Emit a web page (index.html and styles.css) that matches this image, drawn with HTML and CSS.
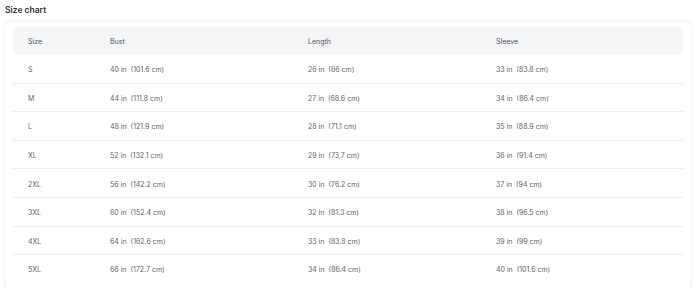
FILE: index.html
```html
<!DOCTYPE html>
<html>
<head>
<meta charset="utf-8">
<link rel="stylesheet" href="styles.css">
</head>
<body>
<div class="page">
  <h2 class="title">Size chart</h2>
  <div class="card">
    <table class="chart">
      <thead>
        <tr><th class="c1">Size</th><th class="c2">Bust</th><th class="c3">Length</th><th class="c4">Sleeve</th></tr>
      </thead>
      <tbody>
        <tr><td>S</td><td>40 in&nbsp; (101.6 cm)</td><td>26 in&nbsp; (66 cm)</td><td>33 in&nbsp; (83.8 cm)</td></tr>
        <tr><td>M</td><td>44 in&nbsp; (111.8 cm)</td><td>27 in&nbsp; (68.6 cm)</td><td>34 in&nbsp; (86.4 cm)</td></tr>
        <tr><td>L</td><td>48 in&nbsp; (121.9 cm)</td><td>28 in&nbsp; (71.1 cm)</td><td>35 in&nbsp; (88.9 cm)</td></tr>
        <tr><td>XL</td><td>52 in&nbsp; (132.1 cm)</td><td>29 in&nbsp; (73.7 cm)</td><td>36 in&nbsp; (91.4 cm)</td></tr>
        <tr><td>2XL</td><td>56 in&nbsp; (142.2 cm)</td><td>30 in&nbsp; (76.2 cm)</td><td>37 in&nbsp; (94 cm)</td></tr>
        <tr><td>3XL</td><td>60 in&nbsp; (152.4 cm)</td><td>32 in&nbsp; (81.3 cm)</td><td>38 in&nbsp; (96.5 cm)</td></tr>
        <tr><td>4XL</td><td>64 in&nbsp; (162.6 cm)</td><td>33 in&nbsp; (83.8 cm)</td><td>39 in&nbsp; (99 cm)</td></tr>
        <tr><td>5XL</td><td>68 in&nbsp; (172.7 cm)</td><td>34 in&nbsp; (86.4 cm)</td><td>40 in&nbsp; (101.6 cm)</td></tr>
      </tbody>
    </table>
  </div>
</div>
</body>
</html>
```
FILE: styles.css
```css
html, body {
  margin: 0;
  padding: 0;
  background: #ffffff;
}
body {
  font-family: Inter, "Noto Sans", "Liberation Sans", sans-serif;
  color: #5f6369;
}
.page {
  padding: 5px 9px 0 5px;
}
.title {
  margin: 0;
  font-size: 8.5px;
  font-weight: 600;
  color: #33363a;
  line-height: 11px;
  height: 17px;
}
.card {
  background: #fff;
  border-radius: 5px;
  box-shadow: 0 0 3px rgba(0, 0, 0, 0.10), 0 1px 2px rgba(0, 0, 0, 0.05);
  padding: 5px 8px 6px 8px;
}
.chart {
  width: 100%;
  border-collapse: separate;
  border-spacing: 0;
  table-layout: fixed;
  font-size: 7px;
}
.chart th {
  background: #f5f6f8;
  font-weight: 400;
  text-align: left;
  height: 28px;
  padding: 0 0 0 15px;
  color: #4f5359;
}
.chart th:first-child {
  border-radius: 5px 0 0 5px;
}
.chart th:last-child {
  border-radius: 0 5px 5px 0;
}
.c1 { width: 67px; }
.c2 { width: 183px; }
.c3 { width: 173px; }
.chart td {
  height: 25.6px;
  padding: 2px 0 0 15px;
  border-bottom: 1px solid #eceef0;
  white-space: nowrap;
}
.chart tbody tr:last-child td {
  border-bottom: none;
}
```
